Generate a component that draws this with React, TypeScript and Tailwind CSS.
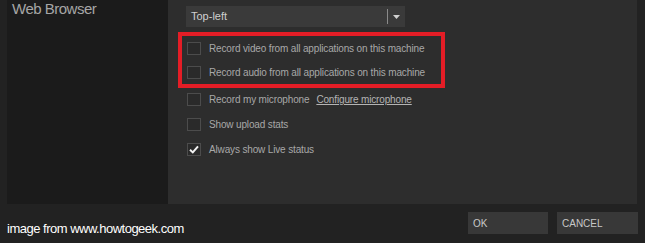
import { FC } from "react";

interface CheckRowProps {
  label: string;
  checked?: boolean;
  link?: string;
  className?: string;
}

const CheckRow: FC<CheckRowProps> = ({ label, checked, link, className }) => {
  return (
    <div className={`flex items-center ${className ?? ""}`}>
      <div className="w-[14px] h-[13px] border border-[#4c4c4c] bg-[#2a2a2a] flex items-center justify-center shrink-0">
        {checked && (
          <svg width="10" height="9" viewBox="0 0 10 9">
            <path
              d="M1 4.8 L3.8 7.4 L9 1.4"
              fill="none"
              stroke="#f2f2f2"
              strokeWidth="2"
            />
          </svg>
        )}
      </div>
      <span className="ml-[8px] text-[10px] tracking-[-0.15px] text-[#a8a8a8] whitespace-nowrap">
        {label}
      </span>
      {link && (
        <span className="ml-[7px] text-[10px] tracking-[-0.15px] text-[#b4b4b4] underline whitespace-nowrap">
          {link}
        </span>
      )}
    </div>
  );
};

const App: FC = () => {
  return (
    <div
      className="w-[645px] h-[243px] bg-[#222222] flex flex-col overflow-hidden"
      style={{ fontFamily: '"Liberation Sans", Arial, sans-serif' }}
    >
      <div className="flex h-[204px] pl-[7px] pr-[8px]">
        <div className="w-[161px] bg-[#1b1b1b] pl-[5px]">
          <div className="text-[15px] tracking-[-0.5px] text-[#a6a6a6] leading-[18px]">
            Web Browser
          </div>
        </div>
        <div className="flex-1 bg-[#2d2d2d] pt-[6px]">
          <div className="ml-[18px] w-[219px] h-[21px] bg-[#3a3a3a] flex items-center">
            <span className="flex-1 pl-[5px] text-[11px] text-[#cfcfcf]">
              Top-left
            </span>
            <div className="w-px h-[15px] bg-[#8a8a8a]" />
            <div className="w-[17px] flex justify-center">
              <svg width="7" height="4" viewBox="0 0 7 4">
                <path d="M0 0 H7 L3.5 4 Z" fill="#d0d0d0" />
              </svg>
            </div>
          </div>
          <div className="ml-[10px] mt-[5px] w-[267px] h-[56px] border-[4px] border-[#e41d26] pl-[5px]">
            <CheckRow
              className="h-[24px]"
              label="Record video from all applications on this machine"
            />
            <CheckRow
              className="h-[24px]"
              label="Record audio from all applications on this machine"
            />
          </div>
          <div className="pl-[19px] -mt-[1px]">
            <CheckRow
              className="h-[25px]"
              label="Record my microphone"
              link="Configure microphone"
            />
            <CheckRow className="h-[25px]" label="Show upload stats" />
            <CheckRow
              className="h-[25px]"
              label="Always show Live status"
              checked
            />
          </div>
        </div>
      </div>
      <div className="flex-1 flex items-start pl-[7px] pr-[7px]">
        <div className="mt-[16px] text-[13px] tracking-[-0.5px] text-white leading-[18px]">
          image from www.howtogeek.com
        </div>
        <div className="ml-auto mt-[8px] flex gap-[9px]">
          <div className="w-[80px] h-[22px] bg-[#383838] flex items-center pl-[5px] text-[10px] text-[#c8c8c8]">
            OK
          </div>
          <div className="w-[81px] h-[22px] bg-[#383838] flex items-center pl-[5px] text-[10px] text-[#c8c8c8]">
            CANCEL
          </div>
        </div>
      </div>
    </div>
  );
};

export default App;
